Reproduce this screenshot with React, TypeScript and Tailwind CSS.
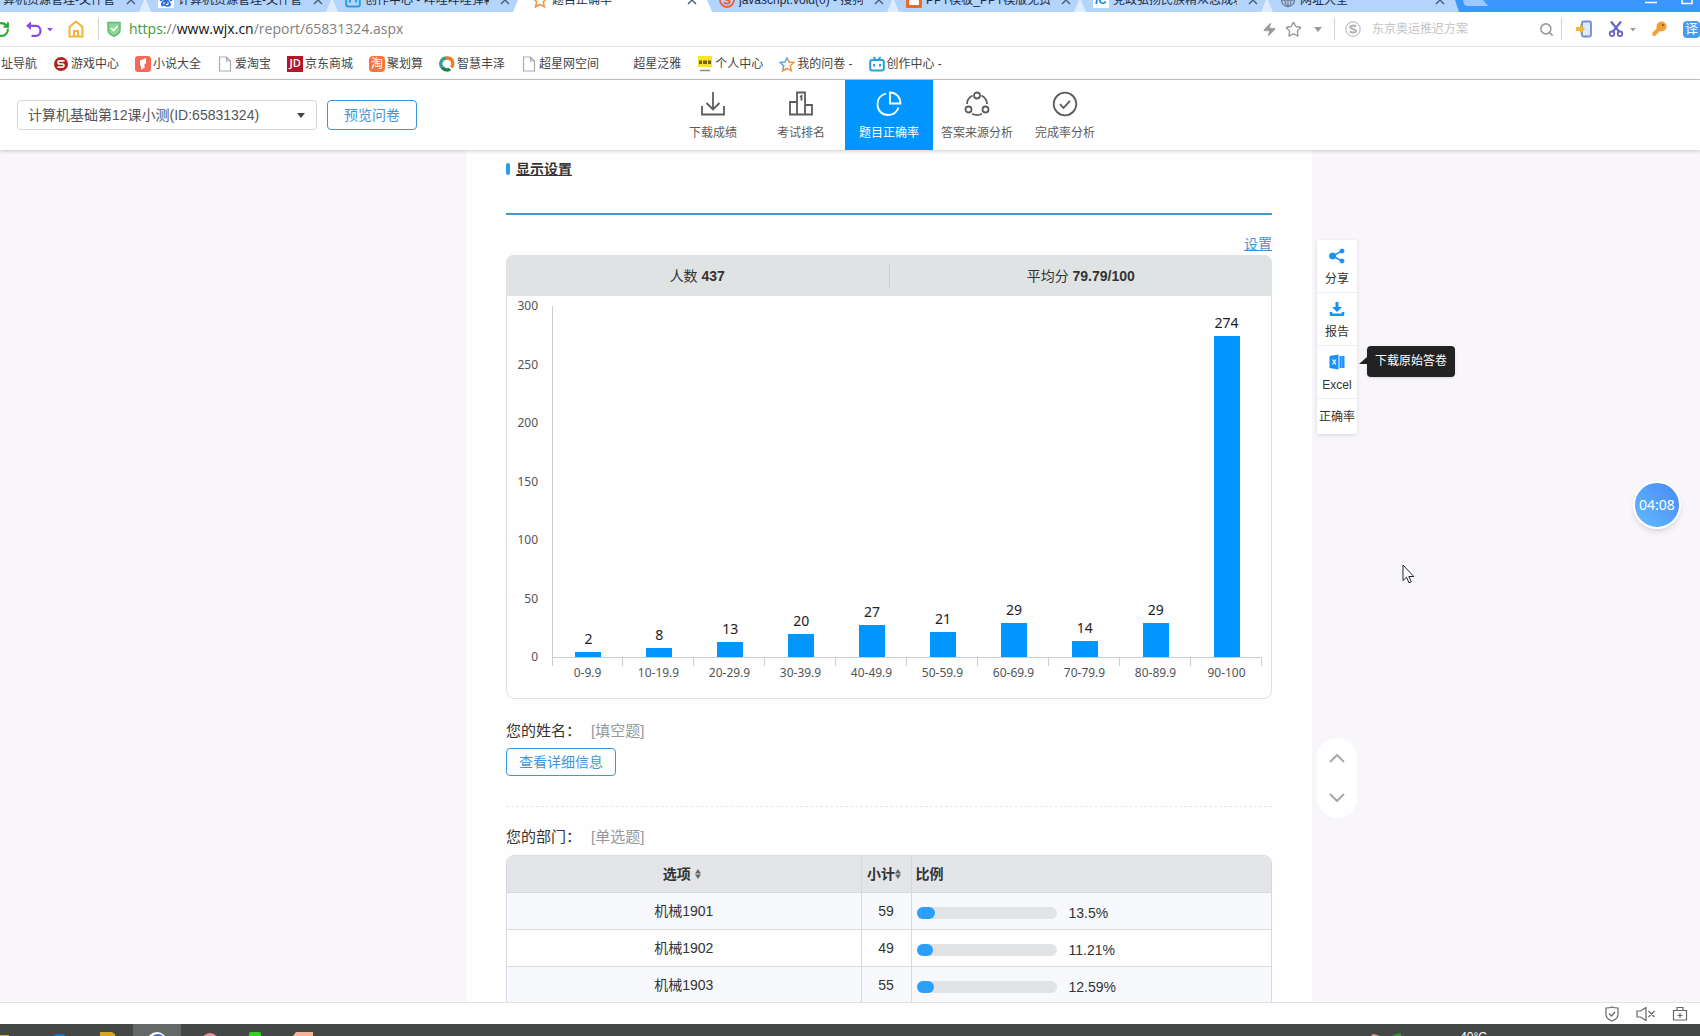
import type { ReactNode } from "react";
import { RotateCw, Search, Star, Zap } from "lucide-react";

const tabs = [
  { title: "计算机资源管理-文件管理", icon: "paw" },
  { title: "计算机资源管理-文件管理", icon: "paw" },
  { title: "创作中心 - 哔哩哔哩弹幕视频网", icon: "bili" },
  { title: "题目正确率", icon: "star", active: true },
  { title: "javascript.void(0) - 搜狗搜索", icon: "sogou" },
  { title: "PPT模板_PPT模版免费 | 下载", icon: "ppt" },
  { title: "党政弘扬民族精众志成城战疫", icon: "ic" },
  { title: "网址大全", icon: "globe" },
];

const bookmarks = [
  { title: "游戏中心", icon: "game" },
  { title: "小说大全", icon: "novel" },
  { title: "爱淘宝", icon: "page" },
  { title: "京东商城", icon: "jd" },
  { title: "聚划算", icon: "tao" },
  { title: "智慧丰泽", icon: "swirl" },
  { title: "超星网空间", icon: "page" },
  { title: "超星泛雅", icon: "none" },
  { title: "个人中心", icon: "yellow" },
  { title: "我的问卷 -", icon: "wjx" },
  { title: "创作中心 -", icon: "bili" },
];

const scores = [
  { range: "0-9.9", count: 2 },
  { range: "10-19.9", count: 8 },
  { range: "20-29.9", count: 13 },
  { range: "30-39.9", count: 20 },
  { range: "40-49.9", count: 27 },
  { range: "50-59.9", count: 21 },
  { range: "60-69.9", count: 29 },
  { range: "70-79.9", count: 14 },
  { range: "80-89.9", count: 29 },
  { range: "90-100", count: 274 },
];

const departments = [
  { name: "机械1901", total: 59, percent: 13.5 },
  { name: "机械1902", total: 49, percent: 11.21 },
  { name: "机械1903", total: 55, percent: 12.59 },
];

const SiteIcon = ({ name }: { name: string }) => {
  switch (name) {
    case "paw":
      return (
        <span className="flex size-4 items-center justify-center bg-white">
          <svg viewBox="0 0 16 16" className="size-4" fill="#2f6fe0">
            <ellipse cx="3" cy="7" rx="1.6" ry="2.2" />
            <ellipse cx="6" cy="3.6" rx="1.6" ry="2.2" />
            <ellipse cx="10" cy="3.6" rx="1.6" ry="2.2" />
            <ellipse cx="13" cy="7" rx="1.6" ry="2.2" />
            <path d="M8 7c2 0 5 3.400 5 5.500S11 15 8 14.500 3 15 3 12.500 6 7 8 7z" />
            <path d="M6 10v2.500M10 10v2.500h-2" stroke="#fff" fill="none" />
          </svg>
        </span>
      );
    case "bili":
      return (
        <svg viewBox="0 0 16 16" className="size-4" fill="none" stroke="#2a9fe0" strokeWidth="2">
          <rect x="1.200" y="4" width="13.600" height="10.500" rx="2" />
          <path d="M4.500 1l2 2.500M11.500 1l-2 2.500M5 8v2.500M11 8v2.500" />
        </svg>
      );
    case "star":
    case "wjx":
      return (
        <svg viewBox="0 0 16 16" className="size-4" fill="none" strokeWidth="1.500">
          <path d="M8 1.500l2 4.500 5 .5-3.700 3.300 1 4.900L8 12.300" stroke="#f0954a" />
          <path d="M8 12.300l-4.300 2.400 1-4.900L1 6.500l5-.5 2-4.500" stroke={name === "star" ? "#f0954a" : "#5aa4ec"} />
          <path d="M4.200 12l-.5 2.700L8 12.300" stroke="#f0954a" />
        </svg>
      );
    case "sogou":
      return (
        <svg viewBox="0 0 16 16" className="size-4" fill="none" stroke="#ee5a36" strokeWidth="1.800">
          <circle cx="8" cy="8" r="7" />
          <path d="M11 5.500C9 4 5 4.500 5.500 6.500S11 8 10.800 10 7 12 4.800 10.500" />
        </svg>
      );
    case "ppt":
      return (
        <svg viewBox="0 0 16 16" className="size-4">
          <rect width="16" height="16" rx="1" fill="#ee6a26" />
          <path d="M3 13V9l3-5h4l3 5v4z" fill="#fff" />
        </svg>
      );
    case "ic":
      return (
        <span className="flex size-4 items-center justify-center bg-white text-xs font-bold text-[#1a8ee0] italic">IC</span>
      );
    case "globe":
      return (
        <svg viewBox="0 0 16 16" className="size-4" fill="none" stroke="#6d7f96" strokeWidth="1.300">
          <circle cx="8" cy="8" r="6.500" />
          <ellipse cx="8" cy="8" rx="3" ry="6.500" />
          <path d="M1.500 8h13M8 1.500v13" />
        </svg>
      );
    case "game":
      return (
        <svg viewBox="0 0 16 16" className="size-4">
          <circle cx="8" cy="8" r="7" fill="#b5221d" />
          <path d="M11.500 4.800H6.800C4.500 4.800 4.500 8 6.800 8h2.400c2.300 0 2.300 3.200 0 3.200H4.500" fill="none" stroke="#fff" strokeWidth="1.700" />
        </svg>
      );
    case "novel":
      return (
        <svg viewBox="0 0 16 16" className="size-4">
          <rect width="16" height="16" rx="3" fill="#f46a58" />
          <path d="M5 4.500L11 2v5.500l-1.500.5V12L6 13.500V9.500L5 10z" fill="#fff" />
        </svg>
      );
    case "page":
      return (
        <svg viewBox="0 0 16 16" className="size-4" fill="#fff" stroke="#a9a9a9" strokeWidth="1.200">
          <path d="M2.500 1h7l4 4v10h-11zM9.500 1v4h4" />
        </svg>
      );
    case "jd":
      return (
        <span className="flex size-4 items-center justify-center bg-[#b5152b] font-[Open_Sans] text-[11px] font-semibold text-white">JD</span>
      );
    case "tao":
      return (
        <span className="flex size-4 items-center justify-center rounded bg-[#f0783f] text-xs text-white">淘</span>
      );
    case "swirl":
      return (
        <svg viewBox="0 0 16 16" className="size-4" fill="none" strokeWidth="3.400">
          <path d="M7.500 2C1.500 2.500 0 9 4 12.500" stroke="#3aa08e" />
          <path d="M3.500 11.500C5.500 14.500 9.500 14.500 11 13" stroke="#16824f" />
          <path d="M7 2.200c5.500-1 8.500 4 5.500 9.300" stroke="#ef7b2b" />
        </svg>
      );
    case "yellow":
      return (
        <svg viewBox="0 0 16 16" className="size-4">
          <path d="M1 0h14v11H1z" fill="#fbe32c" />
          <path d="M2 4.500h3v3.500H2zM6 4.500h4v3.500H6zM11 4.500h3v3.500h-3z" fill="#6d6415" />
          <path d="M3 14.500h10" stroke="#8a8a8a" strokeWidth="1.500" />
        </svg>
      );
    default:
      return <span className="size-4" />;
  }
};

const Caret = ({ className }: { className: string }) => (
  <svg viewBox="0 0 8 5" className={`h-[5px] w-2 ${className}`} fill="currentColor">
    <path d="M0 0h8L4 5z" />
  </svg>
);

const TabBar = () => (
  <div className="flex h-3 shrink-0 items-end overflow-hidden bg-[#3a97ff]">
    <div className="-ml-[41px] flex h-6 min-w-0">
      {tabs.map((tab, i) => (
        <div
          key={i}
          className={`relative flex w-[187px] min-w-0 items-center gap-1 pr-[6px] pl-3 text-xs text-[#1d2b3d] ${tab.active ? "bg-white" : "bg-[#b2d4fd]"}`}
        >
          {i > 0 && (
            <svg viewBox="0 0 12 12" className="absolute bottom-0 -left-[7px] h-3 w-3" fill={tab.active || tabs[i - 1].active ? "#fff" : "#deecff"}>
              <path d={tab.active ? "M5 0h7v12H0z" : tabs[i - 1].active ? "M0 0h7l5 12H0z" : "M5 0h2l5 12H0z"} />
            </svg>
          )}
          <SiteIcon name={tab.icon} />
          <span className="w-[124px] overflow-hidden whitespace-nowrap">{tab.title}</span>
          <button aria-label="关闭标签页" className="ml-auto p-1">
            <svg viewBox="0 0 10 10" className="size-[10px]" fill="none" stroke="#4a5b70" strokeWidth="1.400">
              <path d="M1 1l8 8M9 1L1 9" />
            </svg>
          </button>
        </div>
      ))}
      <svg viewBox="0 0 40 24" className="h-6 w-10">
        <path d="M0 12L4 24H0z" fill="#b2d4fd" />
        <path d="M8 12h20l5 6h-21q-2 0-3-2z" fill="#9ccaff" />
      </svg>
    </div>
    <div className="ml-auto flex h-6 items-center gap-6 pr-[7px] text-white">
      <svg viewBox="0 0 12 12" className="size-3" stroke="currentColor" strokeWidth="1.500">
        <path d="M0 8.500h12" />
      </svg>
      <svg viewBox="0 0 12 12" className="size-3" fill="none" stroke="currentColor" strokeWidth="1.500">
        <path d="M1 0h10v9.500H1z" />
      </svg>
    </div>
  </div>
);

const AddressBar = () => (
  <div className="flex h-[35px] shrink-0 items-center overflow-hidden border-b border-[#e4e4e6] bg-white">
    <button aria-label="刷新" className="-ml-[7px]">
      <RotateCw className="size-[17px] text-[#2aa836]" strokeWidth={3} />
    </button>
    <button aria-label="后退" className="ml-4">
      <svg viewBox="0 0 16 16" className="size-4" fill="none" stroke="#8b4be0" strokeWidth="2.200">
        <path d="M5.500 14.800H10c6 0 6-10 0-10H2" />
        <path d="M0 4.800L5 .5v8.600z" fill="#8b4be0" stroke="none" />
      </svg>
    </button>
    <Caret className="ml-1 scale-75 text-[#8b4be0]" />
    <button aria-label="主页" className="ml-[14px]">
      <svg viewBox="0 0 16 18" className="h-[18px] w-4" fill="none" stroke="#f5b335" strokeWidth="2">
        <path d="M1.500 7L8 1.500 14.500 7v9.500h-13zM6 16v-5h4v5" />
      </svg>
    </button>
    <span className="ml-[14px] h-[22px] w-px bg-[#d0d0d0]" />
    <svg viewBox="0 0 14 16" className="ml-2 h-4 w-[14px]" fill="none">
      <path d="M1 1.500h12V9c0 3.500-3 5-6 6.200C4 14 1 12.500 1 9z" fill="#8fd49c" stroke="#5fbd72" strokeWidth="1.500" />
      <path d="M4 7l2.500 2.500L10.500 5" stroke="#fff" strokeWidth="1.700" />
    </svg>
    <span className="ml-2 font-[Open_Sans] text-sm whitespace-nowrap text-[#808080]">
      <span className="text-[#3d9a40]">https:</span>//<span className="text-[#111]">www.wjx.cn</span>/report/65831324.aspx
    </span>
    <div className="ml-auto flex shrink-0 items-center text-[#9a9a9a]">
      <Zap className="size-[15px] fill-current" strokeWidth={1} />
      <Star className="ml-2 size-[17px]" strokeWidth={2} />
      <Caret className="ml-3" />
      <span className="ml-3 h-[22px] w-px bg-[#d0d0d0]" />
      <svg viewBox="0 0 16 16" className="ml-[10px] size-4" fill="none" stroke="#b0b0b0">
        <circle cx="8" cy="8" r="7.200" />
        <path d="M11.200 5.400C9 4 5 4.500 5.200 6.400S11 8 11 9.900 7 12 4.700 10.400" strokeWidth="2" />
      </svg>
      <input
        aria-label="搜索"
        placeholder="东京奥运推迟方案"
        className="ml-[11px] w-[167px] text-xs outline-none placeholder:text-[#c4c4c4]"
      />
      <Search className="size-[15px]" strokeWidth={2.5} />
      <span className="ml-[7px] h-[22px] w-px bg-[#d0d0d0]" />
      <svg viewBox="0 0 16 18" className="ml-[14px] h-[18px] w-4" fill="none">
        <rect x="6" y="1.500" width="9" height="15" rx="1.500" fill="#dfeafb" stroke="#6d8fd0" strokeWidth="1.800" />
        <path d="M0 7h4V4l5 5-5 5v-3H0z" fill="#f4b53c" />
      </svg>
      <svg viewBox="0 0 16 18" className="ml-4 h-[18px] w-4" fill="none" stroke="#6a63c8" strokeWidth="2.200">
        <path d="M3 1.500l8 10M13 1.500l-8 10" />
        <circle cx="4" cy="13.800" r="2.300" strokeWidth="1.800" />
        <circle cx="12" cy="13.800" r="2.300" strokeWidth="1.800" />
      </svg>
      <Caret className="ml-[5px] scale-75" />
      <svg viewBox="0 0 16 18" className="ml-[14px] h-[18px] w-4" fill="#f0a13a">
        <circle cx="10.500" cy="6.500" r="5" />
        <path d="M6 8l3 3-5 5H1.500v-3.500z" />
        <circle cx="12" cy="5" r="1.300" fill="#a8691a" />
      </svg>
      <span className="ml-4 flex size-[17px] items-center justify-center rounded-sm bg-[#459df0] text-[13px] text-white">译</span>
    </div>
  </div>
);

const BookmarkBar = () => (
  <div className="flex h-[33px] shrink-0 items-center gap-4 overflow-hidden border-b border-[#c6c6c8] bg-white pt-px pl-px text-xs text-[#444]">
    <a href="#" className="whitespace-nowrap">址导航</a>
    {bookmarks.map((item) => (
      <a key={item.title} href="#" className="flex items-center gap-[2px] whitespace-nowrap">
        <SiteIcon name={item.icon} />
        {item.title}
      </a>
    ))}
  </div>
);

const NavItem = ({ label, active, children }: { label: string; active?: boolean; children: ReactNode }) => (
  <a
    href="#"
    className={`flex w-[88px] flex-col items-center pt-[11px] text-xs whitespace-nowrap ${active ? "bg-[#0095ff] text-white" : "text-[#5c5c5c]"}`}
  >
    <svg viewBox="0 0 26 26" className="size-[26px]" fill="none" stroke="currentColor" strokeWidth="1.800">
      {children}
    </svg>
    <span className="mt-2 leading-4">{label}</span>
  </a>
);

const Header = () => (
  <header className="z-10 grid h-[70px] shrink-0 grid-cols-[1fr_auto_1fr] bg-white pl-[78px] shadow-[0_1px_4px_rgba(0,0,0,0.2)]">
    <div className="-ml-[61px] flex items-center gap-[10px] pb-px">
      <div className="relative w-[300px]">
        <select
          aria-label="问卷"
          className="h-[30px] w-full appearance-none rounded-sm border border-[#d5d5d9] bg-white pl-[10px] text-sm text-[#555]"
        >
          <option>计算机基础第12课小测(ID:65831324)</option>
        </select>
        <Caret className="pointer-events-none absolute top-[13px] right-3 text-[#444]" />
      </div>
      <button className="h-[30px] w-[90px] rounded border border-[#3f95dc] text-sm text-[#3f95dc]">预览问卷</button>
    </div>
    <nav className="flex">
      <NavItem label="下载成绩">
        <path d="M2 15v8.500h22V15M13 1v17M6.500 12l6.500 6.500 6.500-6.500" />
      </NavItem>
      <NavItem label="考试排名">
        <path d="M9 11H2v12.500h22V14h-7M9 23.500V1.500h8v22M12 6l1.500-1v4.500" />
      </NavItem>
      <NavItem label="题目正确率" active>
        <path d="M10 2.500C4.500 4 1.500 8.500 1.500 13.500c0 6 4.500 10.500 10.500 10.500 5 0 9-3 10.500-7.500M14 1.500v11h10.500C24.500 6 20 1.500 14 1.500z" />
      </NavItem>
      <NavItem label="答案来源分析">
        <circle cx="13" cy="4.500" r="3" />
        <circle cx="4.500" cy="18.500" r="3" />
        <circle cx="21.500" cy="18.500" r="3" />
        <path d="M8.500 4.500c-3.500 2-5.500 5-5.500 8.500M17.500 4.500c3.500 2 5.500 5 5.500 8.500M8 22.800c3 1.600 7 1.600 10 0" />
      </NavItem>
      <NavItem label="完成率分析">
        <circle cx="13" cy="13" r="11.300" />
        <path d="M8 13l3.500 3.800 6.500-7" />
      </NavItem>
    </nav>
  </header>
);

const ScoreChart = () => (
  <section className="rounded-lg border border-[#dfdfe6]">
    <div className="-mx-px -mt-px flex h-[41px] items-center rounded-t-lg bg-[#e0e3e4] text-sm text-[#333]">
      <p className="flex-1 text-center">
        人数 <b>437</b>
      </p>
      <span className="h-6 w-px bg-[#c9ccd2]" />
      <p className="flex-1 text-center">
        平均分 <b>79.79/100</b>
      </p>
    </div>
    <div className="flex pt-[10px] pr-[9px] pb-[18px] font-[Noto_Sans]">
      <div className="flex h-[351px] w-[45px] flex-col justify-between pr-[14px] text-xs text-[#555]">
        {[300, 250, 200, 150, 100, 50, 0].map((n) => (
          <span key={n} className="flex h-0 items-center justify-end">{n}</span>
        ))}
      </div>
      <div className="flex-1">
        <div className="flex h-[352px] border-b border-l border-[#c9ccd2]">
          {scores.map((item) => (
            <div key={item.range} className="flex flex-1 flex-col items-center justify-end">
              <span className="mb-[3px] text-sm text-[#222]">{item.count}</span>
              <div className="min-h-[5px] w-[26px] bg-[#0095ff]" style={{ height: `${(item.count / 300) * 100}%` }} />
            </div>
          ))}
        </div>
        <div className="flex">
          {scores.map((item) => (
            <div key={item.range} className="group flex-1 text-center text-xs leading-[14px] whitespace-nowrap text-[#555]">
              <div className="h-2 border-r border-[#c9ccd2] group-first:border-l" />
              {item.range}
            </div>
          ))}
        </div>
      </div>
    </div>
  </section>
);

const SortIcon = () => (
  <svg viewBox="0 0 6 10" className="h-[10px] w-[6px]" fill="#666">
    <path d="M3 0l3 4.400H0zM3 10l3-4.400H0z" />
  </svg>
);

const DepartmentTable = () => (
  <div className="mt-[6px] overflow-hidden rounded-t-lg border border-[#d8d9df]">
    <table className="w-full border-collapse text-sm text-[#333]">
      <thead className="bg-[#e3e5e9]">
        <tr className="h-9 border-b border-[#d8d9df]">
          <th className="border-r border-[#d8d9df] pr-1">
            <button className="inline-flex items-center gap-1 font-bold">选项 <SortIcon /></button>
          </th>
          <th className="w-[50px] border-r border-[#d8d9df] pr-1">
            <button className="inline-flex items-center font-bold">小计<SortIcon /></button>
          </th>
          <th className="w-[360px] pl-1 text-left">比例</th>
        </tr>
      </thead>
      <tbody>
        {departments.map((row) => (
          <tr key={row.name} className="h-[37px] border-b border-[#d8d9df] odd:bg-[#f8f9fc]">
            <td className="border-r border-[#d8d9df] text-center">{row.name}</td>
            <td className="border-r border-[#d8d9df] text-center">{row.total}</td>
            <td className="pt-1 pl-[5px]">
              <div className="flex items-center gap-3">
                <div className="h-3 w-[140px] rounded-md bg-[#e2e3e5]">
                  <div className="h-3 min-w-4 rounded-md bg-[#2a9ffc]" style={{ width: `${row.percent}%` }} />
                </div>
                {row.percent}%
              </div>
            </td>
          </tr>
        ))}
      </tbody>
    </table>
  </div>
);

const SideTools = () => (
  <aside className="absolute top-[90px] left-full ml-[5px] w-10 text-xs text-[#333]">
    <div className="divide-y divide-[#ececf0] bg-white shadow-[0_1px_4px_rgba(0,0,0,0.12)]">
      <button className="flex h-[53px] w-full flex-col items-center pt-2">
        <svg viewBox="0 0 16 16" className="size-4" fill="#1890ff" stroke="#1890ff">
          <circle cx="3.500" cy="8" r="3" />
          <circle cx="13" cy="3" r="2" />
          <circle cx="13" cy="13" r="2" />
          <path d="M13 3L3.500 8l9.500 5" fill="none" strokeWidth="1.500" />
        </svg>
        <span className="mt-[7px]">分享</span>
      </button>
      <button className="flex h-[53px] w-full flex-col items-center pt-2">
        <svg viewBox="0 0 16 16" className="size-4" fill="#1890ff">
          <path d="M6.500 1h3v5H13L8 11 3 6h3.500z" />
          <path d="M2 11v2.700h12V11" fill="none" stroke="#1890ff" strokeWidth="2.600" strokeLinejoin="round" />
        </svg>
        <span className="mt-[7px]">报告</span>
      </button>
      <button className="flex h-[53px] w-full flex-col items-center pt-2">
        <svg viewBox="0 0 16 16" className="size-4" fill="#1890ff">
          <path d="M.5 2L9.500.5v15L.5 14z" />
          <path d="M10.500 2H15.500v12h-5z" />
          <path d="M12.800 2v12" stroke="#6ab8ff" />
          <path d="M3.500 5.500l3.500 5M7 5.500l-3.500 5" stroke="#fff" strokeWidth="1.300" />
        </svg>
        <span className="mt-[7px]">Excel</span>
      </button>
      <button className="h-[35px] w-full whitespace-nowrap">正确率</button>
    </div>
    <div role="tooltip" className="absolute top-[106px] left-[50px] h-[31px] rounded-sm bg-[#222] px-2 leading-[31px] whitespace-nowrap text-white shadow">
      <svg viewBox="0 0 8 8" className="absolute top-[11px] -left-2 size-2" fill="#222">
        <path d="M0 7L8 0v7z" />
      </svg>
      下载原始答卷
    </div>
  </aside>
);

const PageJump = () => (
  <div className="absolute top-[588px] left-full ml-[5px] flex h-20 w-10 flex-col items-center justify-between rounded-[20px] bg-white py-4 text-[#aaa6aa]">
    <button aria-label="上一题">
      <svg viewBox="0 0 16 9" className="h-[9px] w-4" fill="none" stroke="currentColor" strokeWidth="2">
        <path d="M1 8l7-7 7 7" />
      </svg>
    </button>
    <button aria-label="下一题">
      <svg viewBox="0 0 16 9" className="h-[9px] w-4" fill="none" stroke="currentColor" strokeWidth="2">
        <path d="M1 1l7 7 7-7" />
      </svg>
    </button>
  </div>
);

const StatusBar = () => (
  <div className="flex h-[22px] shrink-0 items-center justify-end gap-4 border-t border-[#e2e2e6] bg-white pr-3 text-[#666]">
    <svg viewBox="0 0 16 16" className="size-4" fill="none" stroke="currentColor" strokeWidth="1.200">
      <path d="M8 1c2 1 4 1 6 1v6c0 4-3 6-6 7-3-1-6-3-6-7V2c2 0 4 0 6-1zM5 7.500L7.500 10 11 6" />
    </svg>
    <svg viewBox="0 0 20 16" className="h-4 w-5" fill="none" stroke="currentColor" strokeWidth="1.200">
      <path d="M1 5h3.500L10 1.500v13L4.500 11H1zM12.500 5l6 6M18.500 5l-6 6" />
    </svg>
    <svg viewBox="0 0 16 16" className="size-4" fill="none" stroke="currentColor" strokeWidth="1.200">
      <path d="M1.500 4.500h13V14h-13zM5 4.500v-3h6v3M8 7v5M5.500 9.500h5" />
    </svg>
  </div>
);

const Taskbar = () => (
  <footer className="flex h-3 shrink-0 items-start justify-between overflow-hidden bg-[#444746] text-xs text-white">
    <svg viewBox="0 0 340 12" className="h-3 w-[340px]">
      <path d="M133 0h48v12h-48z" fill="#646866" />
      <path d="M0 11h9v1H0z" fill="#c9b820" />
      <path d="M54 12q0-2 2-2h7q2 0 2 2z" fill="#1673cc" />
      <path d="M100 8h12l3 2v2h-15z" fill="#d2a823" />
      <circle cx="157" cy="18" r="10" fill="#fff" />
      <circle cx="158" cy="18" r="8" fill="#4a6bbd" />
      <circle cx="158" cy="18" r="6" fill="#fff" />
      <circle cx="210" cy="18" r="9" fill="#e8909c" />
      <path d="M249 12v-2q0-2 2-2h8q2 0 2 2v2z" fill="#2fd31c" />
      <path d="M293 12l3-4h17v4z" fill="#f3b796" />
    </svg>
    <div className="flex pr-[213px]">
      <svg viewBox="0 0 90 12" className="h-3 w-[90px]">
        <path d="M1 11l3-1 6 2H2z" fill="#d8a0a0" />
        <path d="M22 12l4-2 5-1v3z" fill="#3b8f3a" />
      </svg>
      <span className="pt-[5px] leading-4">40°C</span>
    </div>
  </footer>
);

const App = () => {
  return (
    <div className="flex h-screen flex-col overflow-hidden bg-[#f8f6fa] font-['Liberation_Sans','Noto_Sans_CJK_SC',sans-serif]">
      <TabBar />
      <AddressBar />
      <BookmarkBar />
      <Header />
      <main className="relative min-h-0 flex-1 overflow-hidden pl-[78px]">
        <div className="relative mx-auto min-h-full max-w-[846px] bg-[#fefeff] px-10 pt-[9px]">
          <h2 className="flex items-center gap-[6px] text-sm leading-5 font-bold text-[#333] underline">
            <span className="h-3 w-1 rounded-sm bg-[#25a0ea]" />
            显示设置
          </h2>
          <div className="mt-[34px] border-t-2 border-[#4398cf]" />
          <div className="mt-[19px] mb-px text-right text-sm leading-5">
            <a href="#" className="text-[#3f95dc] underline">设置</a>
          </div>
          <ScoreChart />
          <p className="mt-5 flex gap-[10px] text-[15px] leading-6 text-[#333]">
            您的姓名：<span className="text-[#999]">[填空题]</span>
          </p>
          <button className="mt-[5px] h-7 w-[110px] rounded border border-[#3f95dc] text-sm text-[#3f95dc]">查看详细信息</button>
          <div className="mt-[30px] border-t border-dashed border-[#e8e8ee]" />
          <p className="mt-[18px] flex gap-[10px] text-[15px] leading-6 text-[#333]">
            您的部门：<span className="text-[#999]">[单选题]</span>
          </p>
          <DepartmentTable />
          <SideTools />
          <PageJump />
        </div>
        <div className="absolute top-[331px] right-[19px] flex size-12 items-center justify-center rounded-full border-2 border-white bg-linear-to-tr from-[#62bcff] to-[#4a88f5] font-[Noto_Sans] text-sm text-white shadow-md">
          04:08
        </div>
        <svg viewBox="0 0 13 20" className="absolute top-[414px] right-[285px] h-5 w-[13px]" fill="#fff" stroke="#222">
          <path d="M1 1v15.500l3.500-3.300 2.500 5.600 2.300-1-2.500-5.300h5z" />
        </svg>
      </main>
      <StatusBar />
      <Taskbar />
    </div>
  );
};

export default App;
